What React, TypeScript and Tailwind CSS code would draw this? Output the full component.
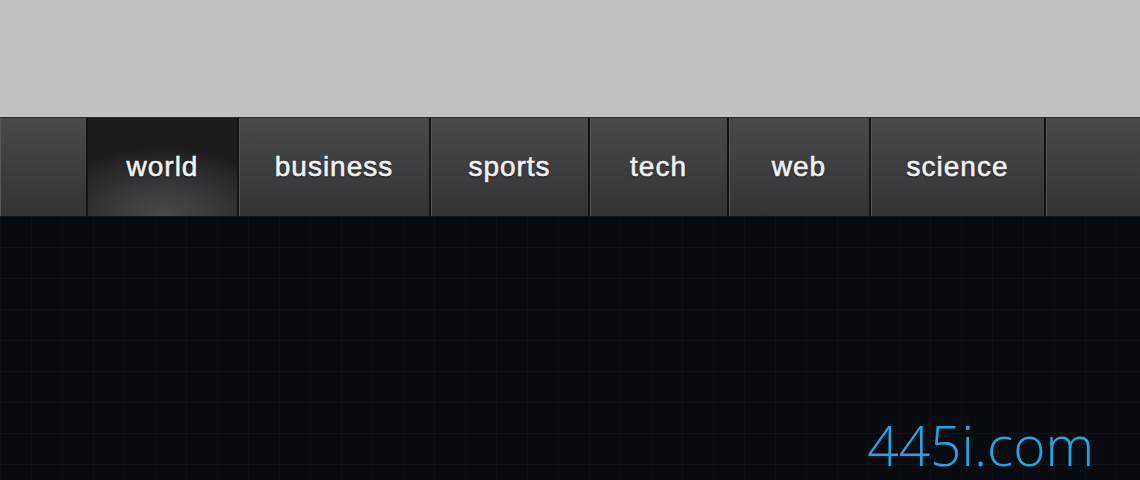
import React from "react";

const items = [
  { label: "", w: "w-[88px]" },
  { label: "world", w: "w-[151px]", active: true },
  { label: "business", w: "w-[192px]" },
  { label: "sports", w: "w-[159px]" },
  { label: "tech", w: "w-[139px]" },
  { label: "web", w: "w-[142px]" },
  { label: "science", w: "w-[175px]" },
];

export default function App() {
  return (
    <div className="w-[1140px] h-[480px] flex flex-col overflow-hidden bg-[#080b0f] font-['Liberation_Sans',Arial,sans-serif]">
      <div className="h-[117px] shrink-0 bg-[#c1c2c4]" />
      <div className="h-px shrink-0 bg-[#2a2a2c]" />
      <nav className="h-[98px] shrink-0 flex">
        {items.map((it, i) => (
          <div
            key={i}
            className={`${it.w} shrink-0 h-full flex items-center justify-center border-r-2 border-r-[#121214] ${
              it.active
                ? "bg-[radial-gradient(ellipse_80%_70%_at_50%_100%,#4a4a4c_0%,#343436_55%,#1d1d1f_100%)]"
                : "bg-gradient-to-b from-[#4a4a4c] to-[#333335] shadow-[inset_1px_0_0_#57575a]"
            }`}
          >
            {it.label && (
              <span className="text-[28px] leading-none font-normal tracking-[1px] text-[#f2f2f2] [-webkit-text-stroke:0.6px_#f2f2f2] [text-shadow:0_1px_2px_rgba(0,0,0,0.7)]">
                {it.label}
              </span>
            )}
          </div>
        ))}
        <div className="flex-1 h-full bg-gradient-to-b from-[#4a4a4c] to-[#333335] shadow-[inset_1px_0_0_#57575a]" />
      </nav>
      <div className="flex-1 flex justify-end items-end pr-[46px] pb-[6px] bg-[#080b0f] bg-[linear-gradient(to_right,rgba(40,50,60,0.18)_1px,transparent_1px),linear-gradient(to_bottom,rgba(40,50,60,0.18)_1px,transparent_1px)] bg-[size:31px_31px]">
        <span className="text-[55px] leading-[58px] font-light text-[#25a3e2] font-['Open_Sans',sans-serif]">
          445i.com
        </span>
      </div>
    </div>
  );
}
